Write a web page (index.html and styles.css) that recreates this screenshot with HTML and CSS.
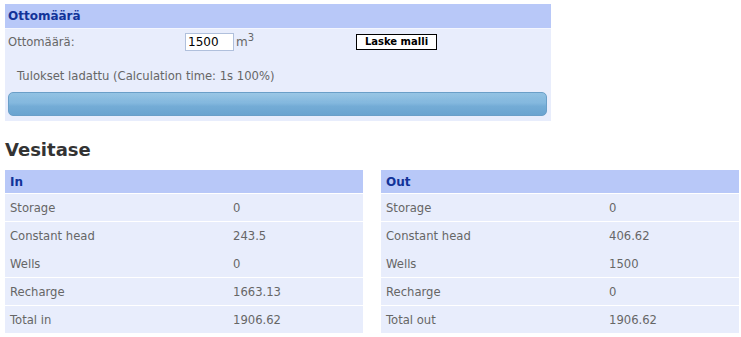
FILE: index.html
```html
<!DOCTYPE html>
<html>
<head>
<meta charset="utf-8">
<link rel="stylesheet" href="styles.css">
</head>
<body>
<div class="panel">
  <div class="panel-head">Ottomäärä</div>
  <div class="panel-body">
    <div class="form-row">
      <span class="form-label">Ottomäärä:</span>
      <input class="amount" type="text" value="1500">
      <span class="unit">m<sup>3</sup></span>
      <button class="calc-btn" type="button">Laske malli</button>
    </div>
    <div class="status">Tulokset ladattu (Calculation time: 1s 100%)</div>
    <div class="progress"><div class="progress-fill"></div></div>
  </div>
</div>

<h2 class="title">Vesitase</h2>

<div class="tables">
  <table class="balance">
    <thead><tr><th colspan="2">In</th></tr></thead>
    <tbody>
      <tr><td class="lbl">Storage</td><td>0</td></tr>
      <tr class="nosep"><td class="lbl">Constant head</td><td>243.5</td></tr>
      <tr><td class="lbl">Wells</td><td>0</td></tr>
      <tr><td class="lbl">Recharge</td><td>1663.13</td></tr>
      <tr><td class="lbl">Total in</td><td>1906.62</td></tr>
    </tbody>
  </table>
  <table class="balance">
    <thead><tr><th colspan="2">Out</th></tr></thead>
    <tbody>
      <tr><td class="lbl">Storage</td><td>0</td></tr>
      <tr class="nosep"><td class="lbl">Constant head</td><td>406.62</td></tr>
      <tr><td class="lbl">Wells</td><td>1500</td></tr>
      <tr><td class="lbl">Recharge</td><td>0</td></tr>
      <tr><td class="lbl">Total out</td><td>1906.62</td></tr>
    </tbody>
  </table>
</div>
</body>
</html>
```
FILE: styles.css
```css
html, body {
  margin: 0;
  padding: 0;
  background: #ffffff;
}
body {
  padding: 4px 2px 0 5px;
  font-family: "DejaVu Sans", Verdana, sans-serif;
  font-size: 11.6px;
  color: #666;
}
.panel {
  width: 546px;
  background: #e8edfc;
}
.panel-head {
  height: 24px;
  line-height: 24px;
  background: #b8c8f8;
  color: #123399;
  font-weight: bold;
  font-size: 12px;
  padding-left: 3px;
  border-bottom: 1px solid #f4f6fe;
}
.panel-body {
  padding: 4px 4px 5px 3px;
}
.form-row {
  display: flex;
  align-items: center;
  height: 18px;
}
.form-label {
  width: 177px;
  color: #666;
}
.amount {
  box-sizing: border-box;
  width: 49px;
  height: 18px;
  margin: 0;
  padding: 0 0 0 2px;
  border: 1px solid #b0c0dc;
  background: #fff;
  font-family: "DejaVu Sans", Verdana, sans-serif;
  font-size: 12px;
  color: #000;
  outline: none;
}
.unit {
  margin-left: 2px;
  width: 120px;
  color: #666;
  font-size: 12px;
}
.unit sup {
  font-size: 10px;
  vertical-align: 5px;
  line-height: 0;
}
.calc-btn {
  box-sizing: border-box;
  width: 81px;
  height: 16px;
  margin: 0;
  padding: 0;
  background: #fff;
  border: 1px solid #000;
  font-family: "DejaVu Sans", Verdana, sans-serif;
  font-weight: bold;
  font-size: 10px;
  color: #000;
  line-height: 14px;
}
.status {
  margin-top: 17px;
  padding-left: 9px;
  height: 17px;
  line-height: 17px;
  color: #666;
}
.progress {
  margin-top: 7px;
  height: 24px;
  border-radius: 5px;
  border: 1px solid #6a9fc8;
  box-sizing: border-box;
  overflow: hidden;
  background: linear-gradient(180deg, #8ec0e2 0%, #84b8de 45%, #74acd6 60%, #6aa4d0 100%);
}
.progress-fill {
  height: 100%;
  background: radial-gradient(ellipse 60% 40% at 50% 0%, rgba(255,255,255,0.12), rgba(255,255,255,0) 100%);
}
.title {
  margin: 19px 0 0 0;
  height: 30px;
  font-size: 18px;
  line-height: 20px;
  font-weight: bold;
  color: #333;
}
.tables {
  display: flex;
  gap: 18px;
}
.balance {
  width: 358px;
  border-collapse: collapse;
  background: #e8edfc;
}
.balance th {
  height: 23px;
  padding: 0 0 0 5px;
  text-align: left;
  background: #b8c8f8;
  color: #123399;
  font-size: 12px;
  font-weight: bold;
  border-bottom: 1px solid #ffffff;
}
.balance td {
  height: 27px;
  padding: 0;
  border-bottom: 1px solid #ffffff;
  color: #666;
}
.balance tr:last-child td {
  border-bottom: none;
}
.balance tr.nosep td {
  border-bottom-color: #e8edfc;
}
.balance td.lbl {
  width: 223px;
  padding-left: 5px;
}
```
